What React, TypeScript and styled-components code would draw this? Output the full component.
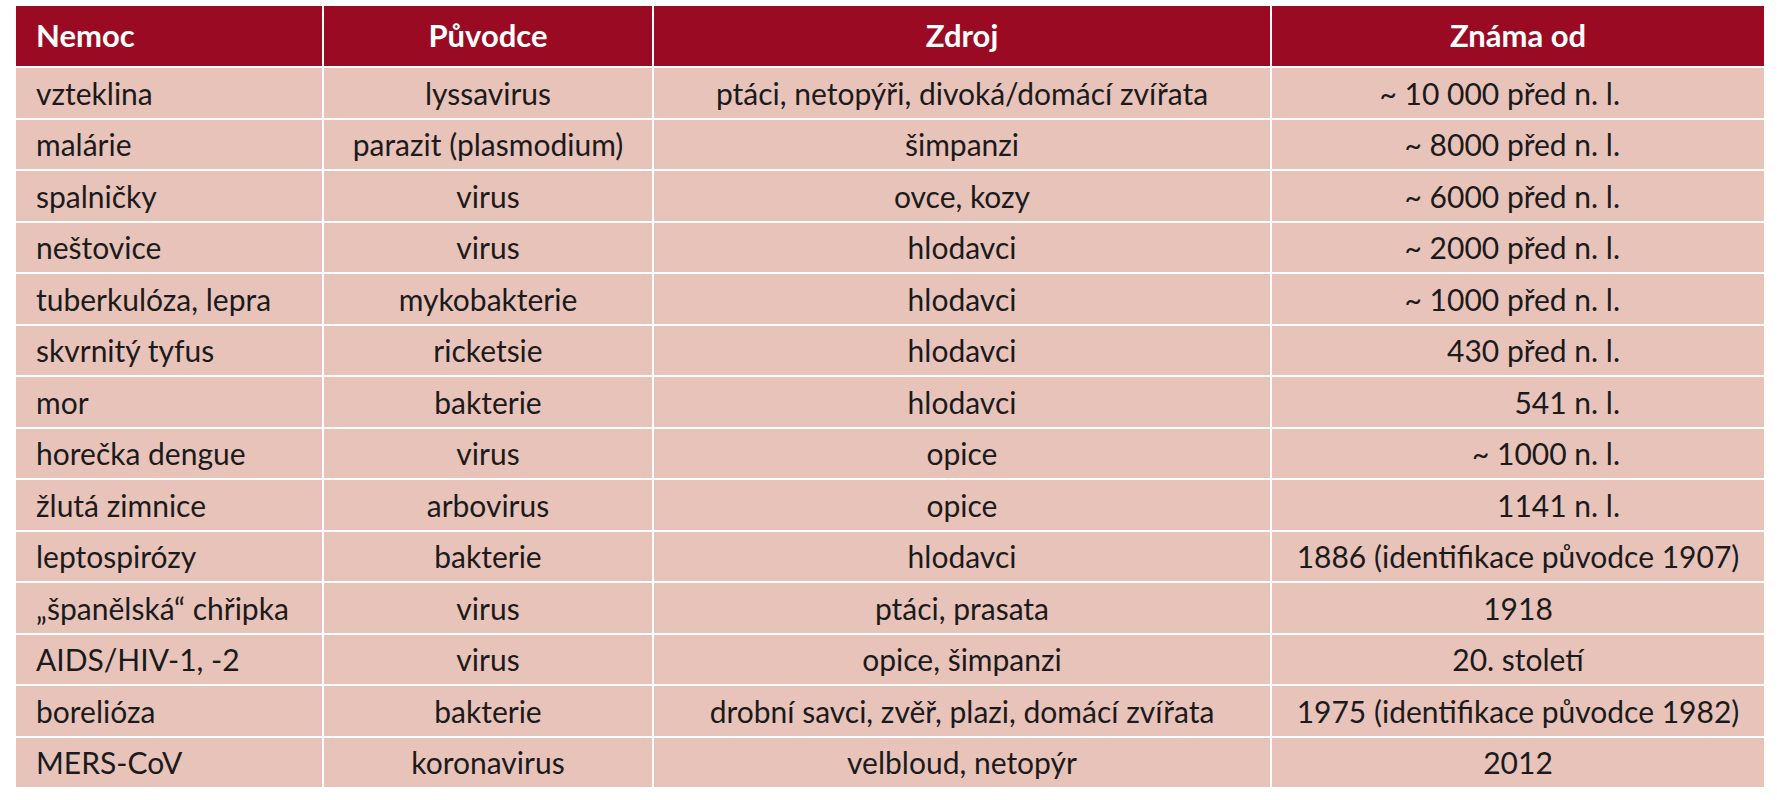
import { Fragment } from "react";
import styled, { createGlobalStyle } from "styled-components";

const Global = createGlobalStyle`
  html, body {
    margin: 0;
    background: #ffffff;
  }
  body {
    padding: 6px 0 0 16px;
    font-family: Lato, "Open Sans", sans-serif;
  }
`;

const Table = styled.div`
  display: grid;
  grid-template-columns: 306px 328px 616px 492px;
  grid-template-rows: 60px;
  grid-auto-rows: 49.5px;
  gap: 2px;
  width: 1748px;
  background: #ffffff;
`;

const HeadCell = styled.div<{ $left?: boolean }>`
  display: flex;
  align-items: center;
  justify-content: ${(p) => (p.$left ? "flex-start" : "center")};
  padding: 0 20px 2px;
  background: #9b0a23;
  color: #ffffff;
  font-size: 31px;
  font-weight: 700;
`;

type Align = "left" | "center" | "right";

const Cell = styled.div<{ $align: Align }>`
  display: flex;
  align-items: center;
  justify-content: ${(p) =>
    p.$align === "left" ? "flex-start" : p.$align === "right" ? "flex-end" : "center"};
  padding: 0 ${(p) => (p.$align === "right" ? "144px" : "20px")} 0 20px;
  background: #e7c3ba;
  color: #1c1a1a;
  font-size: 30px;
  white-space: nowrap;
`;

type Row = [string, string, string, string, Align];

const rows: Row[] = [
  ["vzteklina", "lyssavirus", "ptáci, netopýři, divoká/domácí zvířata", "~ 10\u00a0000 před n. l.", "right"],
  ["malárie", "parazit (plasmodium)", "šimpanzi", "~ 8000 před n. l.", "right"],
  ["spalničky", "virus", "ovce, kozy", "~ 6000 před n. l.", "right"],
  ["neštovice", "virus", "hlodavci", "~ 2000 před n. l.", "right"],
  ["tuberkulóza, lepra", "mykobakterie", "hlodavci", "~ 1000 před n. l.", "right"],
  ["skvrnitý tyfus", "ricketsie", "hlodavci", "430 před n. l.", "right"],
  ["mor", "bakterie", "hlodavci", "541 n. l.", "right"],
  ["horečka dengue", "virus", "opice", "~ 1000 n. l.", "right"],
  ["žlutá zimnice", "arbovirus", "opice", "1141 n. l.", "right"],
  ["leptospirózy", "bakterie", "hlodavci", "1886 (identifikace původce 1907)", "center"],
  ["„španělská“ chřipka", "virus", "ptáci, prasata", "1918", "center"],
  ["AIDS/HIV-1, -2", "virus", "opice, šimpanzi", "20. století", "center"],
  ["borelióza", "bakterie", "drobní savci, zvěř, plazi, domácí zvířata", "1975 (identifikace původce 1982)", "center"],
  ["MERS-CoV", "koronavirus", "velbloud, netopýr", "2012", "center"],
];

const App = () => {
  return (
    <>
      <Global />
      <Table>
        <HeadCell $left>Nemoc</HeadCell>
        <HeadCell>Původce</HeadCell>
        <HeadCell>Zdroj</HeadCell>
        <HeadCell>Známa od</HeadCell>
        {rows.map(([nemoc, puvodce, zdroj, od, align]) => (
          <Fragment key={nemoc}>
            <Cell $align="left">{nemoc}</Cell>
            <Cell $align="center">{puvodce}</Cell>
            <Cell $align="center">{zdroj}</Cell>
            <Cell $align={align}>{od}</Cell>
          </Fragment>
        ))}
      </Table>
    </>
  );
};

export default App;
